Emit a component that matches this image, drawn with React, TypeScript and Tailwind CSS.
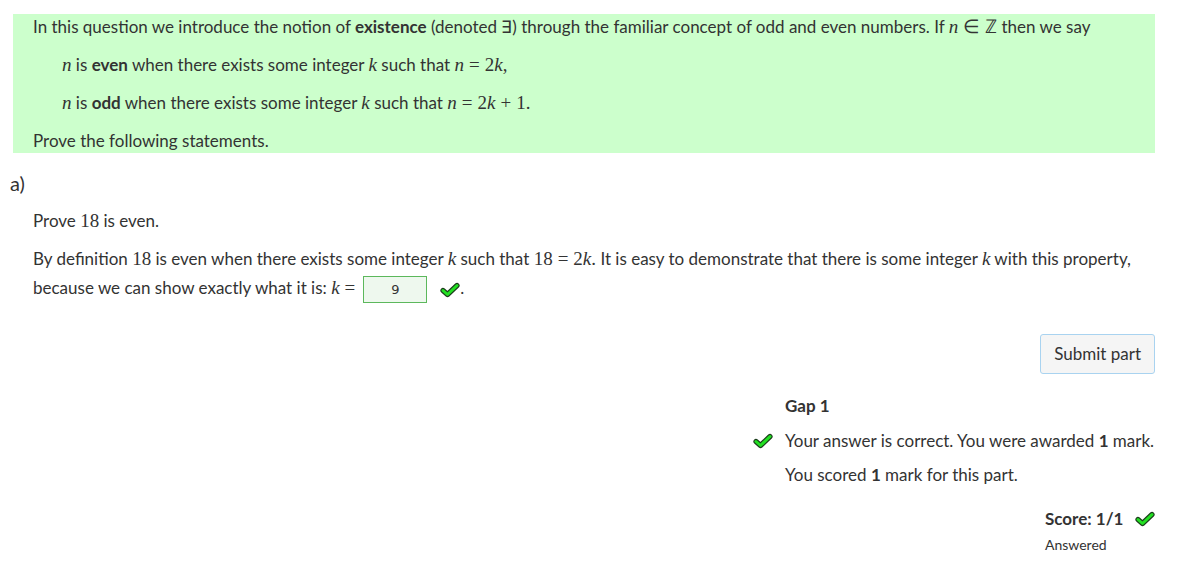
import React from 'react';

const M: React.FC<{ children: React.ReactNode; i?: boolean }> = ({ children, i }) => (
  <span className={`font-['Liberation_Serif',serif] text-[19px] leading-none ${i ? 'italic' : ''}`}>{children}</span>
);

const Rel: React.FC<{ children: React.ReactNode }> = ({ children }) => (
  <span className="font-['Liberation_Serif',serif] text-[19px] leading-none mx-[5px]">{children}</span>
);

const Tick: React.FC<{ className?: string }> = ({ className }) => (
  <svg viewBox="0 0 20 16" className={className}>
    <polyline
      points="3,8.5 7.5,12.5 17,3.5"
      fill="none"
      stroke="#1b3d1b"
      strokeWidth="5.2"
      strokeLinecap="round"
      strokeLinejoin="round"
    />
    <polyline
      points="3,8.5 7.5,12.5 17,3.5"
      fill="none"
      stroke="#22e022"
      strokeWidth="3"
      strokeLinecap="round"
      strokeLinejoin="round"
    />
  </svg>
);

const App: React.FC = () => {
  return (
    <div className="w-[1180px] h-[580px] bg-white text-[#333] font-['Lato',sans-serif] text-[17px] pt-[14px]">
      {/* statement */}
      <div className="ml-[13px] w-[1142px] bg-[#ccffcc] px-[20px] pt-[1px] pb-[0px]">
        <p className="leading-[24px] mb-[14px]">
          In this question we introduce the notion of <b>existence</b> (denoted ∃) through the familiar concept of odd
          and even numbers. If <M i>n</M>
          <Rel>∈</Rel>
          <M>ℤ</M> then we say
        </p>
        <p className="leading-[24px] mb-[14px] pl-[29px]">
          <M i>n</M> is <b>even</b> when there exists some integer <M i>k</M> such that <M i>n</M>
          <Rel>=</Rel>
          <M>2</M>
          <M i>k</M>
          <M>,</M>
        </p>
        <p className="leading-[24px] mb-[14px] pl-[29px]">
          <M i>n</M> is <b>odd</b> when there exists some integer <M i>k</M> such that <M i>n</M>
          <Rel>=</Rel>
          <M>2</M>
          <M i>k</M>
          <Rel>+</Rel>
          <M>1.</M>
        </p>
        <p className="leading-[24px]">Prove the following statements.</p>
      </div>

      {/* part a */}
      <div className="mt-[17px] pl-[10px] text-[20px] leading-[26px]">a)</div>
      <div className="pl-[33px] pr-[25px]">
        <p className="mt-[13px] leading-[24px]">
          Prove <M>18</M> is even.
        </p>
        <p className="mt-[11px] leading-[29px]">
          By definition <M>18</M> is even when there exists some integer <M i>k</M> such that <M>18</M>
          <Rel>=</Rel>
          <M>2</M>
          <M i>k</M>
          <M>.</M> It is easy to demonstrate that there is some integer <M i>k</M> with this property, because we can
          show exactly what it is: <M i>k</M>
          <Rel>=</Rel>
          <span className="inline-flex items-center align-middle ml-[3px]">
            <span className="inline-flex w-[64px] h-[27px] items-center justify-center border border-[#5cb85c] bg-[#eef8ee] text-[13px] font-['DejaVu_Sans',sans-serif]">
              9
            </span>
            <Tick className="w-[20px] h-[16px] ml-[13px]" />
          </span>
          .
        </p>

        <div className="flex justify-end mt-[31px]">
          <button className="h-[40px] px-[13px] rounded-[3px] border border-[#a9d3f0] bg-[#f5f5f5] text-[#333] text-[17px]">
            Submit part
          </button>
        </div>
      </div>

      {/* feedback */}
      <div className="flex justify-end pr-[25px] mt-[20px]">
        <div className="w-[370px]">
          <p className="font-bold leading-[24px]">Gap 1</p>
          <div className="flex items-center mt-[11px] -ml-[32px]">
            <Tick className="w-[20px] h-[16px] mr-[12px]" />
            <p className="leading-[24px]">
              Your answer is correct. You were awarded <b>1</b> mark.
            </p>
          </div>
          <p className="mt-[10px] leading-[24px]">
            You scored <b>1</b> mark for this part.
          </p>
        </div>
      </div>
      <div className="flex justify-end pr-[25px] mt-[20px]">
        <div className="w-[110px]">
          <div className="flex items-center whitespace-nowrap">
            <span className="font-bold text-[17px] leading-[24px]">Score: 1/1</span>
            <Tick className="w-[20px] h-[16px] ml-[12px] shrink-0" />
          </div>
          <p className="text-[14px] leading-[20px] mt-[4px]">Answered</p>
        </div>
      </div>
    </div>
  );
};

export default App;
